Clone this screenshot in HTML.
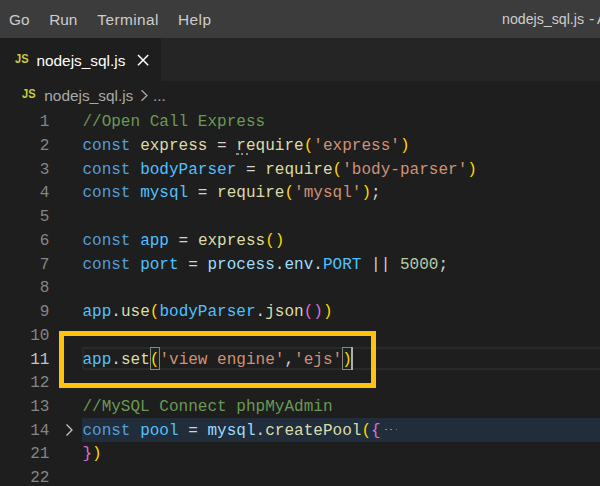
<!DOCTYPE html>
<html><head><meta charset="utf-8">
<style>
html,body{margin:0;padding:0;}
body{width:600px;height:486px;overflow:hidden;background:#1e1e1e;position:relative;font-family:"Liberation Sans",sans-serif;}
.abs{position:absolute;white-space:pre;}
#titlebar{left:0;top:0;width:600px;height:38px;background:#3c3c3c;}
#tabbar{left:0;top:38px;width:600px;height:43px;background:#252526;}
#tab{left:0;top:38px;width:161px;height:43px;background:#1e1e1e;}
.menu{color:#cccccc;font-size:15.4px;line-height:20px;top:10px;}
.ui{font-size:15.4px;line-height:20px;}
.code{font-family:"Liberation Mono",monospace;font-size:16.05px;line-height:24px;left:82.4px;color:#d4d4d4;}
.ln{font-family:"Liberation Mono",monospace;font-size:16.05px;line-height:24px;color:#858585;text-align:right;width:30px;left:19.4px;}
.c{color:#6a9955}.k{color:#569cd6}.v{color:#4fc1ff}.p{color:#9cdcfe}.f{color:#dcdcaa}.s{color:#ce9178}.n{color:#b5cea8}
.b1{color:#ffd700}.b2{color:#da70d6}.b3{color:#179fff}
.js{font-weight:bold;color:#cbcb41;font-size:13.4px;line-height:16px;transform:scaleX(0.83);transform-origin:0 0;}
.bm{border:1px solid #888888;background:#1b251b;box-sizing:border-box;}
</style></head><body>
<div class="abs" id="titlebar"></div>
<div class="abs menu" id="m1" style="left:9px">Go</div>
<div class="abs menu" id="m2" style="left:49.2px">Run</div>
<div class="abs menu" id="m3" style="left:97.3px;letter-spacing:0.42px">Terminal</div>
<div class="abs menu" id="m4" style="left:178px;letter-spacing:0.45px">Help</div>
<div class="abs menu" id="m5" style="left:502px;top:9px;font-size:14.2px">nodejs_sql.js</div>
<div class="abs menu" id="m6" style="left:588.6px;top:9px;font-size:14.2px;transform:scaleX(1.15);transform-origin:0 0">-</div>
<div class="abs menu" id="m7" style="left:597px;top:9px;font-size:14.2px">A</div>
<div class="abs" id="tabbar"></div>
<div class="abs" id="tab"></div>
<div class="abs js" id="js1" style="left:14.8px;top:51px">JS</div>
<div class="abs ui" id="t1" style="left:36.4px;top:50.5px;color:#ffffff">nodejs_sql.js</div>
<svg class="abs" id="x1" style="left:136.3px;top:52.5px" width="14" height="14" viewBox="0 0 14 14"><path d="M2 2L12.2 12.2M12.2 2L2 12.2" stroke="#ffffff" stroke-width="1.5" fill="none"/></svg>
<div class="abs js" id="js2" style="left:22.3px;top:86.2px">JS</div>
<div class="abs ui" id="t2" style="left:44.3px;top:85.8px;color:#a9a9a9">nodejs_sql.js</div>
<svg class="abs" id="ch1" style="left:140px;top:89px" width="9" height="13" viewBox="0 0 9 13"><path d="M1.5 1.2L7 6.5L1.5 11.8" stroke="#a9a9a9" stroke-width="1.3" fill="none"/></svg>
<div class="abs ui" id="t3" style="left:153px;top:85.8px;color:#a9a9a9">...</div>

<div class="abs" id="foldbg" style="left:82px;top:418px;width:518px;height:23.7px;background:#212d3a"></div>
<div class="abs" id="curline" style="left:82px;top:347px;width:518px;height:19px;border-top:2px solid #292929;border-bottom:2px solid #292929;border-left:2px solid #272727;"></div>
<div class="abs bm" id="bm1" style="left:150px;top:347px;width:10.3px;height:23px"></div>
<div class="abs bm" id="bm2" style="left:342.3px;top:347px;width:10.3px;height:23px"></div>
<div class="abs" id="cursor" style="left:350.8px;top:347px;width:2px;height:23px;background:#aeafad"></div>
<!-- hint dots under require -->
<div class="abs" style="left:236px;top:152.9px;width:2.6px;height:2.4px;background:#8a8a8a"></div>
<div class="abs" style="left:240.9px;top:152.9px;width:2.6px;height:2.4px;background:#8a8a8a"></div>
<div class="abs" style="left:245.8px;top:152.9px;width:2.6px;height:2.4px;background:#8a8a8a"></div>

<div class="abs ln" id="N1" style="top:110px">1</div>
<div class="abs ln" id="N2" style="top:134px">2</div>
<div class="abs ln" id="N3" style="top:158px">3</div>
<div class="abs ln" id="N4" style="top:181px">4</div>
<div class="abs ln" id="N5" style="top:205px">5</div>
<div class="abs ln" id="N6" style="top:229px">6</div>
<div class="abs ln" id="N7" style="top:253px">7</div>
<div class="abs ln" id="N8" style="top:276px">8</div>
<div class="abs ln" id="N9" style="top:300px">9</div>
<div class="abs ln" id="N10" style="top:324px">10</div>
<div class="abs ln" id="N11" style="top:348px;color:#c6c6c6">11</div>
<div class="abs ln" id="N12" style="top:371px">12</div>
<div class="abs ln" id="N13" style="top:395px">13</div>
<div class="abs ln" id="N14" style="top:419px">14</div>
<div class="abs ln" id="N21" style="top:442px">21</div>
<div class="abs ln" id="N22" style="top:466px">22</div>
<div class="abs code" id="L1" style="top:110px"><span class="c">//Open Call Express</span></div>
<div class="abs code" id="L2" style="top:134px"><span class="k">const</span> <span class="f">express</span> = <span class="f">require</span><span class="b1">(</span><span class="s">'express'</span><span class="b1">)</span></div>
<div class="abs code" id="L3" style="top:158px"><span class="k">const</span> <span class="v">bodyParser</span> = <span class="f">require</span><span class="b1">(</span><span class="s">'body-parser'</span><span class="b1">)</span></div>
<div class="abs code" id="L4" style="top:181px"><span class="k">const</span> <span class="v">mysql</span> = <span class="f">require</span><span class="b1">(</span><span class="s">'mysql'</span><span class="b1">)</span>;</div>
<div class="abs code" id="L6" style="top:229px"><span class="k">const</span> <span class="v">app</span> = <span class="f">express</span><span class="b1">()</span></div>
<div class="abs code" id="L7" style="top:253px"><span class="k">const</span> <span class="v">port</span> = <span class="p">process</span>.<span class="p">env</span>.<span class="v">PORT</span> || <span class="n">5000</span>;</div>
<div class="abs code" id="L9" style="top:300px"><span class="v">app</span>.<span class="f">use</span><span class="b1">(</span><span class="v">bodyParser</span>.<span class="f">json</span><span class="b2">()</span><span class="b1">)</span></div>
<div class="abs code" id="L11" style="top:348px"><span class="v">app</span>.<span class="f">set</span><span class="b1" id="br1">(</span><span class="s">'view engine'</span>,<span class="s">'ejs'</span><span class="b1" id="br2">)</span></div>
<div class="abs code" id="L13" style="top:395px"><span class="c">//MySQL Connect phpMyAdmin</span></div>
<div class="abs code" id="L14" style="top:419px"><span class="k">const</span> <span class="v">pool</span> = <span class="p">mysql</span>.<span class="f">createPool</span><span class="b1">(</span><span class="b2">{</span></div>
<div class="abs code" id="L21" style="top:442px"><span class="b2">}</span><span class="b1">)</span></div>

<svg class="abs" id="ch2" style="left:64.6px;top:423px" width="9" height="14" viewBox="0 0 9 14"><path d="M1.5 1.5L7 7L1.5 12.5" stroke="#c5c5c5" stroke-width="1.3" fill="none"/></svg>
<div class="abs" style="left:385.3px;top:428.6px;width:1.9px;height:1.9px;border-radius:1px;background:#8e949b"></div>
<div class="abs" style="left:390.4px;top:428.6px;width:1.9px;height:1.9px;border-radius:1px;background:#8e949b"></div>
<div class="abs" style="left:395.5px;top:428.6px;width:1.9px;height:1.9px;border-radius:1px;background:#8e949b"></div>
<div class="abs" id="yrect" style="left:59px;top:331px;width:307px;height:47px;border:5px solid #ffc20e"></div>
</body></html>
